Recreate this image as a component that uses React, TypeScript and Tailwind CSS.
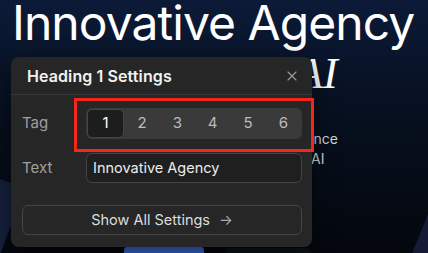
import { X } from "lucide-react";

const tags = ["1", "2", "3", "4", "5", "6"];

export default function App() {
  return (
    <div className="relative w-[428px] h-[253px] overflow-hidden bg-[linear-gradient(180deg,#0c1a38_0%,#07101f_45%,#04070d_100%)] font-['Inter',sans-serif]">
      {/* page content behind the popover */}
      <h1 className="absolute left-[12px] top-[-7px] text-[48px] leading-[60px] tracking-[-0.95px] text-white whitespace-nowrap">
        Innovative Agency
      </h1>
      <div className="absolute left-[296px] top-[52px] text-[44px] leading-[44px] italic font-['Liberation_Serif',serif] text-white">
        AI
      </div>
      <div className="absolute left-[312px] top-[129px] w-[40px] overflow-hidden text-[14px] leading-[20px] text-[#d0d3da]">
        <p className="-ml-[50px] whitespace-nowrap">Intelligence</p>
        <p className="-ml-[1px]">AI</p>
      </div>
      <div className="absolute left-[124px] top-[245px] w-[80px] h-[20px] rounded-md bg-[#3a66d0]" />
      <div className="absolute left-[225px] top-[248px] w-[86px] h-[20px] rounded-md bg-[#0d1118]" />
      <div className="absolute left-[-20px] top-[180px] w-[30px] h-[90px] rotate-[20deg] bg-[#15203c]" />
      <div className="absolute left-[415px] top-[210px] w-[40px] h-[80px] rotate-[22deg] bg-[#141b33]" />

      {/* settings popover */}
      <div className="absolute left-[11px] top-[57px] w-[301px] h-[190px] rounded-lg bg-[#262626] shadow-[0_8px_24px_rgba(0,0,0,0.5)] flex flex-col">
        <div className="h-[38px] flex items-center justify-between pl-4 pr-3 border-b border-[#383838]">
          <span className="text-[16px] font-semibold tracking-[0.1px] text-[#f2f2f2]">Heading 1 Settings</span>
          <X size={16} strokeWidth={1.75} className="text-[#9a9a9a]" />
        </div>
        <div className="flex flex-col pl-[11px] pr-[10px] pt-[13px]">
          <div className="flex items-center">
            <span className="w-[64px] text-[15px] text-[#a0a0a0]">Tag</span>
            <div className="flex-1 flex h-[31px] p-px rounded-md bg-[#3a3a3a]">
              {tags.map((t) => (
                <div
                  key={t}
                  className={`flex-1 flex items-center justify-center rounded-[5px] text-[15px] ${
                    t === "1"
                      ? "bg-[#1d1d1d] border border-[#444] text-white"
                      : "text-[#bcbcbc]"
                  }`}
                >
                  {t}
                </div>
              ))}
            </div>
          </div>
          <div className="flex items-center mt-[14px]">
            <span className="w-[64px] text-[15px] text-[#a0a0a0]">Text</span>
            <div className="flex-1 h-[30px] flex items-center px-[6px] rounded-md bg-[#1f1f1f] border border-[#444] text-[14.5px] text-[#ececec]">
              Innovative Agency
            </div>
          </div>
          <button className="mt-[22px] h-[30px] flex items-center justify-center gap-[9px] rounded-md border border-[#464646] text-[14.5px] text-[#dcdcdc]">
            Show All Settings
            <span className="text-[#aaa]">→</span>
          </button>
        </div>
      </div>

      {/* highlight annotation */}
      <div className="absolute left-[74px] top-[98px] w-[240px] h-[54px] border-[3px] border-[#f5261c]" />
    </div>
  );
}
